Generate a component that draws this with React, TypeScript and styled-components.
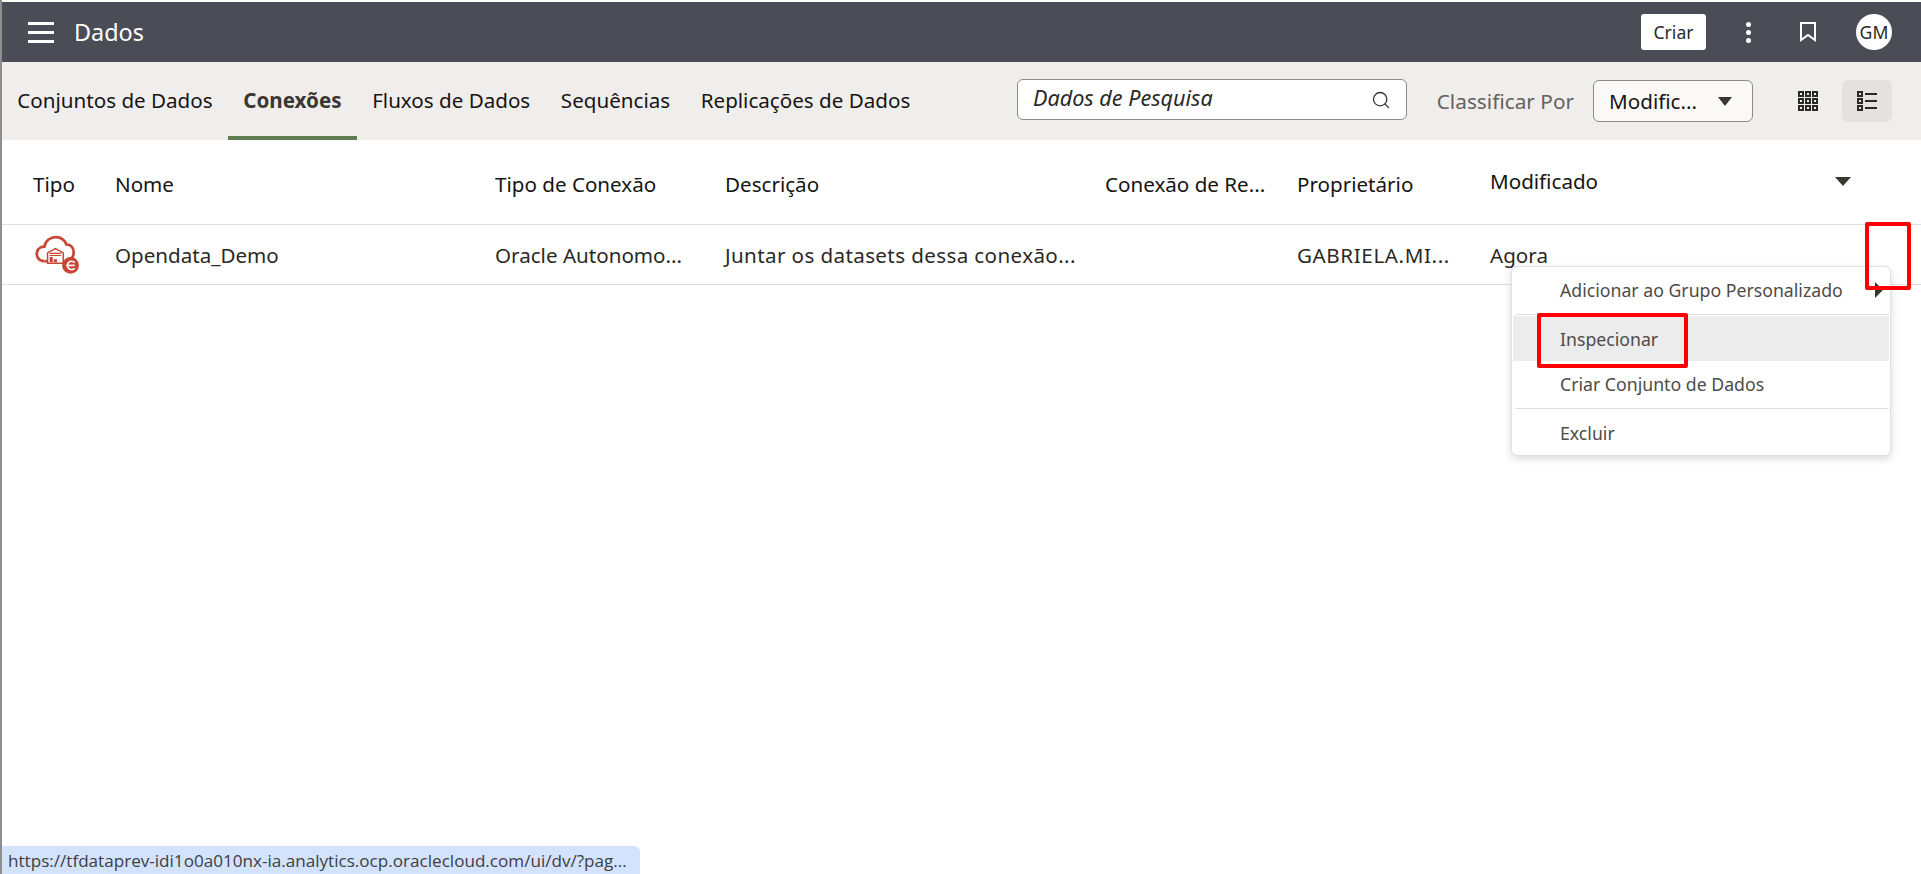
import { FC } from "react";
import styled, { createGlobalStyle } from "styled-components";
import { Search as SearchIcon } from "lucide-react";

const columns = "82px 380px 230px 380px 192px 193px 1fr";

const GlobalStyle = createGlobalStyle`
  html, body {
    margin: 0;
    padding: 0;
    background: #fff;
    font-family: "Noto Sans", "Open Sans", sans-serif;
    overflow: hidden;
  }
`;

const CloudIcon: FC = () => (
  <svg width="46" height="42" viewBox="0 0 44 40">
    <path
      d="M9 25 C3 25 1 20 2 16 C3 12 7 11 9 11 C10 5 15 2 20 2 C25 2 29 5 30 9 C35 9 37 13 37 17 C37 19 36 21 35 22"
      fill="none"
      stroke="#c74634"
      strokeWidth="2.6"
    />
    <path d="M9 25 H14" fill="none" stroke="#c74634" strokeWidth="2.6" />
    <path d="M12 17 L19.5 13 L27 17 V27 H12 Z" fill="#fff" stroke="#c74634" strokeWidth="1.4" />
    <path d="M14 17.5 H25 M14 19.5 H25" stroke="#c74634" strokeWidth="1" />
    <path d="M14 21 h3 v5 h-3 z M18 23 h3 v3 h-3 z" fill="#c74634" />
    <circle cx="34" cy="29" r="8" fill="#c74634" />
    <path d="M38 26.3 A4 4 0 1 0 38 31.7" fill="none" stroke="#fff" strokeWidth="1.6" />
    <path d="M30 29 H38" stroke="#fff" strokeWidth="1.6" />
  </svg>
);

const GridIcon: FC = () => (
  <svg width="20" height="20" viewBox="0 0 20 20">
    {[0, 7, 14].map((y) =>
      [0, 7, 14].map((x) => (
        <rect key={`${x}-${y}`} x={x + 1} y={y + 1} width="4" height="4" fill="none" stroke="#2b2926" strokeWidth="2" />
      ))
    )}
  </svg>
);

const ListIcon: FC = () => (
  <svg width="20" height="20" viewBox="0 0 20 20">
    {[0, 7, 14].map((y) => (
      <g key={y}>
        <rect x="1" y={y + 1} width="4" height="4" fill="none" stroke="#2b2926" strokeWidth="2" />
        <rect x="8" y={y + 2} width="12" height="2" fill="#2b2926" />
      </g>
    ))}
  </svg>
);

const BookmarkIcon: FC = () => (
  <svg width="18" height="22" viewBox="0 0 18 22">
    <path d="M2 2 H16 V19 L9 14 L2 19 Z" fill="none" stroke="#fff" strokeWidth="2" />
  </svg>
);

const App: FC = () => {
  return (
    <Page>
      <GlobalStyle />
      <Header>
        <Burger>
          <span />
          <span />
          <span />
        </Burger>
        <Title>Dados</Title>
        <HeaderRight>
          <CreateButton>Criar</CreateButton>
          <Kebab>
            <span />
            <span />
            <span />
          </Kebab>
          <BookmarkSlot>
            <BookmarkIcon />
          </BookmarkSlot>
          <Avatar>GM</Avatar>
        </HeaderRight>
      </Header>
      <TabBar>
        <Tabs>
          <Tab>Conjuntos de Dados</Tab>
          <Tab active>Conexões</Tab>
          <Tab>Fluxos de Dados</Tab>
          <Tab>Sequências</Tab>
          <Tab>Replicações de Dados</Tab>
        </Tabs>
        <SearchBox>
          <SearchText>Dados de Pesquisa</SearchText>
          <SearchIcon size={20} color="#3a3835" strokeWidth={1.6} />
        </SearchBox>
        <SortLabel>Classificar Por</SortLabel>
        <SortSelect>
          <span>Modific...</span>
          <SelectCaret />
        </SortSelect>
        <ViewButton>
          <GridIcon />
        </ViewButton>
        <ViewButton active>
          <ListIcon />
        </ViewButton>
      </TabBar>
      <HeadRow>
        <HeadCell>Tipo</HeadCell>
        <HeadCell>Nome</HeadCell>
        <HeadCell>Tipo de Conexão</HeadCell>
        <HeadCell>Descrição</HeadCell>
        <HeadCell>Conexão de Re...</HeadCell>
        <HeadCell>Proprietário</HeadCell>
        <HeadCell raised>
          Modificado
          <HeadCaret />
        </HeadCell>
      </HeadRow>
      <BodyRow>
        <IconCell>
          <CloudIcon />
        </IconCell>
        <BodyCell>Opendata_Demo</BodyCell>
        <BodyCell>Oracle Autonomo...</BodyCell>
        <BodyCell tracking={0.38}>Juntar os datasets dessa conexão...</BodyCell>
        <BodyCell></BodyCell>
        <BodyCell tracking={0.6}>GABRIELA.MI...</BodyCell>
        <BodyCell>Agora</BodyCell>
      </BodyRow>
      <Menu>
        <MenuItem>
          Adicionar ao Grupo Personalizado
          <SubCaret />
        </MenuItem>
        <MenuDivider />
        <MenuItem active>Inspecionar</MenuItem>
        <MenuItem>Criar Conjunto de Dados</MenuItem>
        <MenuDivider />
        <MenuItem>Excluir</MenuItem>
      </Menu>
      <Highlight top={222} left={1865} width={46} height={68} />
      <Highlight top={313} left={1537} width={151} height={55} />
      <StatusBubble>https://tfdataprev-idi1o0a010nx-ia.analytics.ocp.oraclecloud.com/ui/dv/?pag...</StatusBubble>
    </Page>
  );
};

export default App;

const Page = styled.div`
  position: relative;
  width: 1921px;
  height: 874px;
  overflow: hidden;
  box-sizing: border-box;
  padding-top: 2px;
  border-left: 2px solid #8e8e8e;
  background: #fff;
`;

const Header = styled.div`
  height: 60px;
  background: #4a4d55;
  display: flex;
  align-items: center;
  padding-left: 26px;
  padding-right: 29px;
  color: #fff;
`;

const Burger = styled.div`
  width: 26px;
  display: flex;
  flex-direction: column;
  gap: 6px;
  span {
    display: block;
    height: 3px;
    background: #fff;
  }
`;

const Title = styled.div`
  margin-left: 20px;
  font-size: 23.4px;
`;

const HeaderRight = styled.div`
  margin-left: auto;
  display: flex;
  align-items: center;
`;

const CreateButton = styled.div`
  width: 65px;
  height: 36px;
  background: #fff;
  border-radius: 3px;
  color: #2b2926;
  font-size: 17.6px;
  display: flex;
  align-items: center;
  justify-content: center;
`;

const Kebab = styled.div`
  margin-left: 40px;
  width: 5px;
  display: flex;
  flex-direction: column;
  gap: 3px;
  span {
    display: block;
    width: 5px;
    height: 5px;
    border-radius: 50%;
    background: #fff;
  }
`;

const BookmarkSlot = styled.div`
  margin-left: 48px;
  display: flex;
`;

const Avatar = styled.div`
  margin-left: 39px;
  width: 36px;
  height: 36px;
  border-radius: 50%;
  background: #fff;
  color: #2b2926;
  font-size: 17.6px;
  display: flex;
  align-items: center;
  justify-content: center;
`;

const TabBar = styled.div`
  height: 78px;
  background: #f0eeec;
  display: flex;
  align-items: center;
  padding-right: 29px;
`;

const Tabs = styled.div`
  display: flex;
  height: 100%;
  width: 1015px;
  flex-shrink: 0;
`;

const Tab = styled.div<{ active?: boolean }>`
  box-sizing: border-box;
  height: 78px;
  padding: 2px 15.3px 0;
  display: flex;
  align-items: center;
  font-size: 20.6px;
  white-space: nowrap;
  color: ${(props) => (props.active ? "#3a3632" : "#161513")};
  font-weight: ${(props) => (props.active ? 700 : 400)};
  border-bottom: 4px solid ${(props) => (props.active ? "#5f7d4f" : "transparent")};
`;

const SearchBox = styled.div`
  box-sizing: border-box;
  width: 390px;
  height: 41px;
  margin-top: -3px;
  border: 1px solid #8f8b86;
  border-radius: 6px;
  background: #fff;
  display: flex;
  align-items: center;
  justify-content: space-between;
  padding: 0 15px;
`;

const SearchText = styled.span`
  font-style: italic;
  font-size: 21.6px;
  line-height: 28px;
  margin-top: -3px;
  color: #2b2926;
`;

const SortLabel = styled.div`
  margin-left: 30px;
  font-size: 20.8px;
  color: #65615c;
  white-space: nowrap;
`;

const SortSelect = styled.div`
  box-sizing: border-box;
  width: 160px;
  height: 42px;
  margin-left: 19px;
  border: 1px solid #8f8b86;
  border-radius: 6px;
  background: #fbf9f8;
  display: flex;
  align-items: center;
  justify-content: space-between;
  padding: 0 20px 0 15px;
  font-size: 20.6px;
  color: #161513;
  white-space: nowrap;
`;

const SelectCaret = styled.span`
  width: 0;
  height: 0;
  border-left: 7px solid transparent;
  border-right: 7px solid transparent;
  border-top: 9px solid #3a3632;
`;

const ViewButton = styled.div<{ active?: boolean }>`
  width: 50px;
  height: 42px;
  flex-shrink: 0;
  margin-left: ${(props) => (props.active ? "9px" : "30px")};
  border-radius: 6px;
  background: ${(props) => (props.active ? "#e4e2de" : "transparent")};
  display: flex;
  align-items: center;
  justify-content: center;
`;

const HeadRow = styled.div`
  display: grid;
  grid-template-columns: ${columns};
  height: 85px;
  box-sizing: border-box;
  padding-left: 31px;
  border-bottom: 1px solid #dde1e6;
  align-items: center;
`;

const HeadCell = styled.div<{ raised?: boolean }>`
  position: relative;
  font-size: 20.6px;
  color: #161513;
  margin-top: ${(props) => (props.raised ? "-3px" : "4px")};
  white-space: nowrap;
`;

const HeadCaret = styled.span`
  position: absolute;
  left: 345px;
  top: 10px;
  width: 0;
  height: 0;
  border-left: 8px solid transparent;
  border-right: 8px solid transparent;
  border-top: 9px solid #3a3632;
`;

const BodyRow = styled.div`
  display: grid;
  grid-template-columns: ${columns};
  height: 60px;
  box-sizing: border-box;
  padding-left: 31px;
  border-bottom: 1px solid #dfdfdf;
  align-items: center;
`;

const IconCell = styled.div`
  display: flex;
  align-items: center;
  height: 42px;
  margin-left: 2px;
  margin-top: 2px;
`;

const BodyCell = styled.div<{ tracking?: number }>`
  font-size: 20.6px;
  margin-top: 1px;
  color: #2b2926;
  white-space: nowrap;
  letter-spacing: ${(props) => props.tracking ?? 0}px;
`;

const Menu = styled.div`
  position: absolute;
  top: 266px;
  left: 1509px;
  box-sizing: border-box;
  width: 380px;
  height: 190px;
  padding: 0 1px;
  background: #fff;
  border: 1px solid #e0e0e0;
  border-radius: 6px;
  box-shadow: 0 3px 8px rgba(0, 0, 0, 0.15);
`;

const MenuItem = styled.div<{ active?: boolean }>`
  position: relative;
  height: ${(props) => (props.active ? "45px" : "46px")};
  display: flex;
  align-items: center;
  padding-left: 47px;
  font-size: 17.7px;
  color: #4f4b47;
  background: ${(props) => (props.active ? "#ececec" : "transparent")};
`;

const MenuDivider = styled.div`
  height: 1px;
  margin: 1px 0 1px 2px;
  background: #e2e0de;
`;

const SubCaret = styled.span`
  position: absolute;
  right: 6px;
  top: 15px;
  width: 0;
  height: 0;
  border-top: 8px solid transparent;
  border-bottom: 8px solid transparent;
  border-left: 8px solid #3a3632;
`;

const Highlight = styled.div<{ top: number; left: number; width: number; height: number }>`
  position: absolute;
  box-sizing: border-box;
  top: ${(props) => props.top}px;
  left: ${(props) => props.left - 2}px;
  width: ${(props) => props.width}px;
  height: ${(props) => props.height}px;
  border: 4px solid #fe0000;
  border-radius: 2px;
`;

const StatusBubble = styled.div`
  position: absolute;
  left: -2px;
  bottom: 0;
  box-sizing: border-box;
  width: 640px;
  height: 28px;
  padding-left: 8px;
  background: #d3e3fd;
  border-top-right-radius: 6px;
  font-family: "Open Sans", "Noto Sans", sans-serif;
  font-size: 17.1px;
  line-height: 29px;
  color: #3c4043;
  white-space: nowrap;
`;
